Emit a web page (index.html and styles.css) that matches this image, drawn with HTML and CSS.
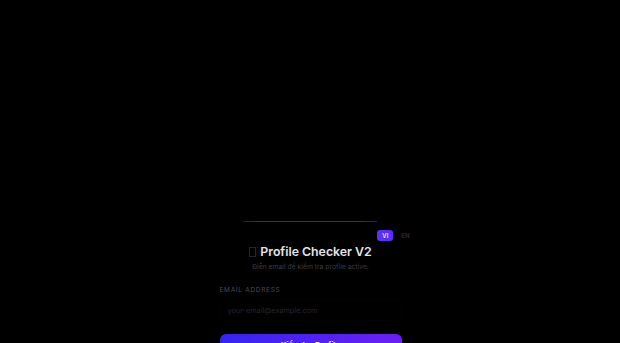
FILE: index.html
```html
<!DOCTYPE html>
<html lang="vi">
<head>
<meta charset="utf-8">
<title>Profile Checker V2</title>
<link rel="stylesheet" href="styles.css">
</head>
<body>
<main class="page">
  <section class="card">
    <div class="lang">
      <span class="lang-btn active">VI</span>
      <span class="lang-btn">EN</span>
    </div>
    <header class="head">
      <h1 class="title"><span class="tofu"></span>Profile Checker V2</h1>
      <p class="sub">Điền email để kiểm tra profile active.</p>
    </header>
    <form class="form">
      <label class="label" for="email">EMAIL ADDRESS</label>
      <input class="input" id="email" type="email" placeholder="your-email@example.com">
      <button class="btn" type="button">Kiểm tra Profile</button>
    </form>
  </section>
</main>
</body>
</html>
```
FILE: styles.css
```css
html, body {
  margin: 0;
  padding: 0;
  background: #000;
  font-family: Inter, "Noto Sans", sans-serif;
  color: #fff;
}
.page {
  display: flex;
  justify-content: center;
  padding-top: 221px;
  padding-left: 1px;
}
.card {
  position: relative;
  width: 182px;
  padding: 0 20px 20px;
}
.card::before {
  content: "";
  position: absolute;
  top: 0;
  left: 43px;
  right: 45px;
  height: 1px;
  background: linear-gradient(90deg, #1d0f8c, #3418e0 12%, #3418e0 88%, #1d0f8c);
}
.lang {
  position: absolute;
  top: 9px;
  right: 9px;
  display: flex;
  align-items: center;
  gap: 5px;
}
.lang-btn {
  font-size: 6px;
  font-weight: 600;
  color: #2e2e36;
  padding: 2px 3px;
  border-radius: 3px;
  line-height: 7px;
}
.lang-btn.active {
  background: #5a2ff6;
  color: #e8e4ff;
  padding: 2px 5px;
}
.head {
  padding-top: 22px;
  text-align: center;
}
.title {
  margin: 0;
  font-size: 12.3px;
  font-weight: 600;
  line-height: 18px;
  color: #e4e4ea;
  display: flex;
  align-items: center;
  justify-content: center;
  gap: 4px;
}
.tofu {
  display: inline-block;
  width: 5px;
  height: 8px;
  border: 1px solid #26262a;
}
.sub {
  margin: 0;
  font-size: 6.8px;
  line-height: 11px;
  color: #3c3c46;
}
.form {
  display: flex;
  flex-direction: column;
  margin-top: 14px;
}
.label {
  font-size: 6.5px;
  letter-spacing: 0.7px;
  color: #4a4a56;
  line-height: 9px;
}
.input {
  margin-top: 4px;
  height: 22px;
  box-sizing: border-box;
  background: #000;
  border: 1px solid #030305;
  border-radius: 5px;
  padding: 0 7px;
  font-family: inherit;
  font-size: 7.3px;
  color: #fff;
  outline: none;
}
.input::placeholder {
  color: #26262c;
}
.btn {
  margin-top: 13px;
  height: 22px;
  border: none;
  border-radius: 6px;
  background: linear-gradient(90deg, #3524f0, #6b1ff2);
  color: #fff;
  font-family: inherit;
  font-size: 8px;
  font-weight: 600;
}
```
